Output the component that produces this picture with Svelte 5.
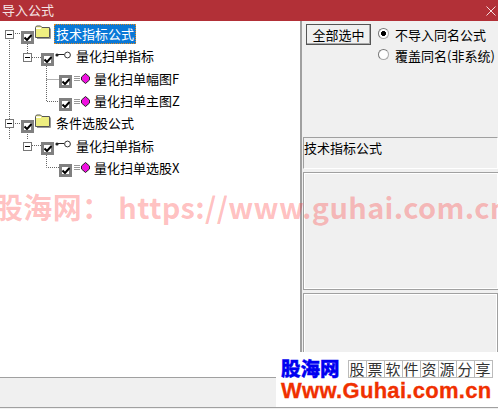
<script>
  const tree = [
    { level: 0, icon: 'folder', label: '技术指标公式', selected: true, expander: true },
    { level: 1, icon: 'key', label: '量化扫单指标', expander: true },
    { level: 2, icon: 'gem', label: '量化扫单幅图F' },
    { level: 2, icon: 'gem', label: '量化扫单主图Z' },
    { level: 0, icon: 'folder', label: '条件选股公式', expander: true },
    { level: 1, icon: 'key', label: '量化扫单指标', expander: true },
    { level: 2, icon: 'gem', label: '量化扫单选股X' }
  ];
  const slogan = ['股', '票', '软', '件', '资', '源', '分', '享'];
</script>

<div class="window">
  <header class="titlebar">
    <span>导入公式</span>
    <svg class="close" width="10" height="10" viewBox="0 0 10 10"><path d="M0.5 0.5L9.5 9.5M9.5 0.5L0.5 9.5" stroke="#f3dcdc" fill="none" /></svg>
  </header>

  <div class="body">
    <div class="tree">
      <svg class="lines" width="100" height="170" viewBox="0 0 100 170">
        <g stroke="#666" stroke-dasharray="1 1" fill="none">
          <path d="M9.5 17V118" />
          <path d="M13 12.5H21M13 102.5H21" />
          <path d="M27.5 23V32M27.5 111V119" />
          <path d="M32 36.5H41M32 124.5H41" />
          <path d="M46.5 45V80.5H59M46.5 58.5H59" />
          <path d="M46.5 132V146.5H59" />
        </g>
      </svg>
      {#each tree as row}
        <div class="row level{row.level}">
          {#if row.expander}
            <span class="expander"></span>
          {/if}
          <span class="check">
            <svg width="8" height="7" viewBox="0 0 8 7"><path d="M0.5 3.5L3 6L7.5 1" stroke="#000" stroke-width="2" fill="none" /></svg>
          </span>
          {#if row.icon === 'folder'}
            <svg class="icon folder" width="16" height="14" viewBox="0 0 16 14">
              <path d="M0.5 12.5V2.5L1.5 1H5.5L7 2.5H14.5V12.5Z" fill="#eeee80" stroke="#555" />
              <path d="M1 2.5H6V4H1Z" fill="#fff" />
              <path d="M15.5 3.5V13.5H2" stroke="#999" fill="none" />
            </svg>
          {:else if row.icon === 'key'}
            <svg class="icon key" width="16" height="8" viewBox="0 0 16 8">
              <circle cx="2" cy="4" r="1.6" fill="#222" />
              <path d="M3 3.5H9" stroke="#222" />
              <circle cx="12.5" cy="4" r="2.9" fill="#fff" stroke="#333" />
            </svg>
          {:else}
            <svg class="icon" width="17" height="11" viewBox="0 0 17 11">
              <path d="M1 3.5H7M1 5.5H7M1 7.5H7" stroke="#999" />
              <path d="M12.5 0.5L16.5 4V7L12.5 10.5L8.5 7V4Z" fill="#f010e0" stroke="#222" />
            </svg>
          {/if}
          <span class="label" class:selected={row.selected} class:wide={row.icon === 'folder'}>{row.label}</span>
        </div>
      {/each}
    </div>

    <aside class="side">
      <div class="actions">
        <button type="button">全部选中</button>
        <div class="radios">
          <label><span class="radio on"></span>不导入同名公式</label>
          <label><span class="radio"></span>覆盖同名(非系统)</label>
        </div>
      </div>
      <div class="desc">技术指标公式</div>
      <div class="box first"></div>
      <div class="box second"></div>
    </aside>
  </div>

  <footer class="status"></footer>

  <div class="watermark">股海网： https://www.guhai.com.cn</div>

  <div class="logo">
    <div class="logo-top">
      <strong>股海网</strong>
      <div class="cells">
        {#each slogan as ch}
          <span>{ch}</span>
        {/each}
      </div>
    </div>
    <div class="logo-url">Www.Guhai.com.cn</div>
  </div>
</div>

<style>
  :global(body) {
    margin: 0;
  }

  .window {
    position: relative;
    width: 498px;
    height: 409px;
    overflow: hidden;
    display: flex;
    flex-direction: column;
    background: #f0f0f0;
    font-family: "Noto Sans CJK SC", "Liberation Sans", sans-serif;
    font-size: 13px;
    color: #000;
  }

  .titlebar {
    height: 21px;
    flex: none;
    display: flex;
    align-items: center;
    justify-content: space-between;
    padding: 0 2px 3px;
    box-sizing: border-box;
    background: #b23037;
    color: #f4e4e4;
  }

  .close {
    margin-top: 3px;
  }

  .body {
    flex: 1;
    display: flex;
    min-height: 0;
  }

  .tree {
    position: relative;
    width: 302px;
    flex: none;
    box-sizing: border-box;
    padding-top: 2px;
    background: #fff;
    border-right: 2px solid #a0a0a0;
  }

  .lines {
    position: absolute;
    left: 0;
    top: 0;
  }

  .row {
    position: relative;
    height: 22.3px;
    display: flex;
    align-items: center;
    white-space: nowrap;
  }

  .level0 { padding-left: 5px; }
  .level1 { padding-left: 23px; }
  .level2 { padding-left: 59px; }

  .expander {
    width: 9px;
    height: 9px;
    flex: none;
    box-sizing: border-box;
    border: 1px solid #777;
    background: linear-gradient(#000, #000) center / 5px 1px no-repeat #fff;
  }

  .level0 .expander { margin-right: 7px; }
  .level1 .expander { margin-right: 9px; margin-top: 2px; }

  .check {
    width: 13px;
    height: 13px;
    flex: none;
    box-sizing: border-box;
    border: 3px solid #808080;
    background: #fff;
    display: flex;
    align-items: center;
    justify-content: center;
    margin-top: 6px;
    margin-right: 1px;
  }

  .check svg {
    flex: none;
  }

  .icon {
    flex: none;
  }

  .folder {
    margin-bottom: 4px;
  }

  .key {
    margin-right: 1px;
    margin-bottom: 3px;
  }

  .label {
    margin-left: 3px;
    padding: 0 1px;
    line-height: 20px;
  }

  .wide {
    padding: 0 2px;
  }

  .selected {
    background: #0a78d7;
    color: #fff;
    outline: 1px dotted #e08a20;
    outline-offset: -1px;
  }

  .side {
    flex: 1;
    min-width: 0;
    display: flex;
    flex-direction: column;
    padding: 3px 0 0 1px;
    box-sizing: border-box;
  }

  .actions {
    display: flex;
    align-items: flex-start;
    gap: 7px;
    padding-left: 3px;
  }

  button {
    width: 65px;
    height: 21px;
    flex: none;
    padding: 0;
    font: inherit;
    background: #f0f0f0;
    border: 1px solid #555;
    box-shadow: inset -1px -1px 0 #aaa;
  }

  .radios {
    display: flex;
    flex-direction: column;
    gap: 2px;
    margin-top: 1px;
  }

  label {
    display: flex;
    align-items: center;
    height: 19px;
    white-space: nowrap;
  }

  .radio {
    width: 11px;
    height: 11px;
    box-sizing: border-box;
    margin-right: 6px;
    margin-bottom: 3px;
    border-radius: 50%;
    border: 1px solid #aaa;
    border-top-color: #777;
    border-left-color: #777;
    background: #fff;
  }

  .radio.on {
    background: radial-gradient(circle, #000 2.2px, #fff 2.8px);
  }

  .desc {
    margin-top: 72px;
    height: 32px;
    flex: none;
    box-sizing: border-box;
    border-top: 1px solid #a0a0a0;
    border-left: 1px solid #a0a0a0;
    border-right: 1px solid #fff;
    border-bottom: 1px solid #fff;
    line-height: 20px;
  }

  .box {
    box-sizing: border-box;
    flex: none;
    border: 1px solid #a0a0a0;
    box-shadow: inset 1px 1px 0 #fff, inset -1px -1px 0 #fff;
  }

  .first {
    margin-top: 3px;
    height: 118px;
    border-right: none;
  }

  .second {
    margin-top: 3px;
    flex: 1;
  }

  .status {
    height: 31px;
    flex: none;
    box-sizing: border-box;
    background: #f0f0f0;
    border-top: 1px solid #a0a0a0;
    border-bottom: 1px solid #a0a0a0;
    margin-bottom: 1px;
  }

  .watermark {
    position: absolute;
    left: -6px;
    top: 186px;
    font-size: 29px;
    line-height: 40px;
    font-weight: 700;
    letter-spacing: 0.35px;
    color: rgba(255, 60, 60, 0.32);
    white-space: nowrap;
  }

  .logo {
    position: absolute;
    left: 276px;
    top: 352px;
    width: 222px;
    height: 55px;
    background: #fff;
    padding: 6px 0 0 5px;
    box-sizing: border-box;
  }

  .logo-top {
    display: flex;
    align-items: center;
    gap: 8px;
  }

  strong {
    color: #0000f0;
    font-size: 19.5px;
    line-height: 20px;
    font-weight: 900;
    -webkit-text-stroke: 0.4px #0000f0;
  }

  .cells {
    display: flex;
    border: 1px solid #bbb;
    border-right: none;
    margin-top: 1px;
  }

  .cells span {
    width: 18px;
    height: 16px;
    box-sizing: border-box;
    border-right: 1px solid #bbb;
    font-family: "Noto Sans CJK SC", serif;
    font-size: 15px;
    line-height: 16px;
    text-align: center;
    color: #333;
  }

  .logo-url {
    margin-top: 2px;
    font-family: "Liberation Sans", sans-serif;
    font-weight: 700;
    font-size: 22px;
    line-height: 22px;
    color: #f03000;
    letter-spacing: 0.3px;
    white-space: nowrap;
    -webkit-text-stroke: 0.3px #f03000;
  }
</style>
